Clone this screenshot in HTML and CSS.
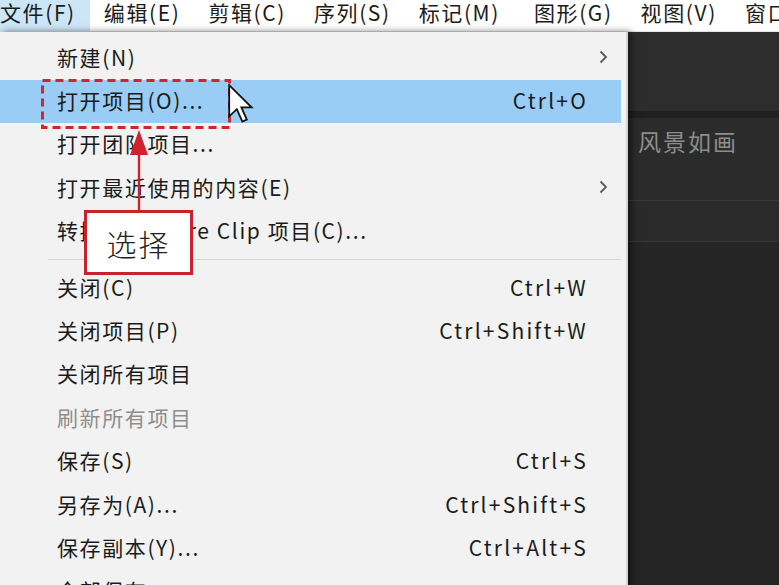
FILE: index.html
```html
<!DOCTYPE html>
<html lang="zh-CN">
<head>
<meta charset="utf-8">
<title>文件菜单</title>
<link rel="stylesheet" href="styles.css">
</head>
<body>
<div class="app">
  <nav class="menubar">
    <span class="mb-item active">文件(F)</span>
    <span class="mb-item">编辑(E)</span>
    <span class="mb-item">剪辑(C)</span>
    <span class="mb-item">序列(S)</span>
    <span class="mb-item wide">标记(M)</span>
    <span class="mb-item">图形(G)</span>
    <span class="mb-item">视图(V)</span>
    <span class="mb-item">窗口(W)</span>
  </nav>
  <div class="workspace">
    <div class="under"></div>
    <aside class="panel">
      <div class="panel-head"></div>
      <div class="panel-band"></div>
      <div class="panel-title">风景如画</div>
      <div class="panel-row"></div>
      <div class="panel-rest"></div>
    </aside>
  </div>

  <div class="menu">
    <div class="row"><span class="label">新建(N)</span><span class="key"></span><span class="sub"><svg width="9" height="14" viewBox="0 0 9 14"><path d="M1.5 1.5 L7 7 L1.5 12.5" fill="none" stroke="#5a5a5a" stroke-width="1.8"/></svg></span></div>
    <div class="row hl"><span class="label">打开项目(O)...</span><span class="key">Ctrl+O</span><span class="sub"></span></div>
    <div class="row"><span class="label">打开团队项目...</span><span class="key"></span><span class="sub"></span></div>
    <div class="row"><span class="label">打开最近使用的内容(E)</span><span class="key"></span><span class="sub"><svg width="9" height="14" viewBox="0 0 9 14"><path d="M1.5 1.5 L7 7 L1.5 12.5" fill="none" stroke="#5a5a5a" stroke-width="1.8"/></svg></span></div>
    <div class="row"><span class="label">转换 Premiere Clip 项目(C)...</span><span class="key"></span><span class="sub"></span></div>
    <div class="sep"></div>
    <div class="row"><span class="label">关闭(C)</span><span class="key">Ctrl+W</span><span class="sub"></span></div>
    <div class="row"><span class="label">关闭项目(P)</span><span class="key">Ctrl+Shift+W</span><span class="sub"></span></div>
    <div class="row"><span class="label">关闭所有项目</span><span class="key"></span><span class="sub"></span></div>
    <div class="row disabled"><span class="label">刷新所有项目</span><span class="key"></span><span class="sub"></span></div>
    <div class="row"><span class="label">保存(S)</span><span class="key">Ctrl+S</span><span class="sub"></span></div>
    <div class="row"><span class="label">另存为(A)...</span><span class="key">Ctrl+Shift+S</span><span class="sub"></span></div>
    <div class="row"><span class="label">保存副本(Y)...</span><span class="key">Ctrl+Alt+S</span><span class="sub"></span></div>
    <div class="row"><span class="label">全部保存</span><span class="key"></span><span class="sub"></span></div>
  </div>

  <svg class="dashbox" width="192" height="52" viewBox="0 0 192 52">
    <rect x="1.5" y="1.5" width="187" height="47" fill="none" stroke="#d5232e" stroke-width="3" stroke-dasharray="8 5"/>
  </svg>

  <svg class="cursor" width="26" height="40" viewBox="0 0 13 20">
    <path d="M0.6 0.6 L0.6 16.2 L4.4 12.6 L7.2 18.8 L9.4 17.8 L6.7 11.7 L11.8 11.7 Z" fill="#ffffff" stroke="#111" stroke-width="0.9" stroke-linejoin="miter"/>
  </svg>

  <svg class="pointer" width="24" height="84" viewBox="0 0 24 84">
    <path d="M12 20 L12 84" stroke="#d0222d" stroke-width="2.4"/>
    <path d="M12 2 L3 27 L21 27 Z" fill="#d0222d"/>
  </svg>

  <div class="callout">选择</div>
</div>
</body>
</html>
```

FILE: styles.css
```css
* { box-sizing: border-box; }
html, body { margin: 0; padding: 0; }
body {
  width: 779px;
  height: 585px;
  overflow: hidden;
  font-family: "Noto Sans CJK SC", "Noto Sans", sans-serif;
  background: #262626;
}
.app {
  position: relative;
  width: 779px;
  height: 585px;
  overflow: hidden;
}

/* menubar */
.menubar {
  display: flex;
  height: 32px;
  margin-left: -14px;
  background: #ffffff;
  border-bottom: 1px solid #e3e3e3;
  white-space: nowrap;
}
.mb-item {
  padding: 0 14px;
  height: 31px;
  line-height: 24px;
  font-size: 21px;
  letter-spacing: 1.6px;
  color: #1b1b1b;
}
.mb-item.wide { padding-right: 20px; }
.mb-item.active { background: #cce6f8; }

/* workspace */
.workspace {
  display: grid;
  grid-template-columns: 628px 1fr;
  height: 553px;
}
.under { background: #2a2a2a; }
.panel {
  display: flex;
  flex-direction: column;
  background: #262626;
}
.panel-head { height: 79px; background: #2d2d2d; }
.panel-band { height: 7px; background: #1f1f1f; }
.panel-title {
  height: 82px;
  background: #2b2b2b;
  padding: 9px 0 0 10px;
  font-size: 23px;
  line-height: 28px;
  letter-spacing: 2px;
  color: #8d8d8d;
}
.panel-row {
  height: 42px;
  background: #2a2a2a;
  border-top: 1px solid #393939;
  border-bottom: 1px solid #393939;
}
.panel-rest { flex: 1; background: #252525; }

/* dropdown menu */
.menu {
  position: absolute;
  left: 0;
  top: 32px;
  width: 628px;
  height: 560px;
  padding: 4.5px 5px 0 0;
  background: #f2f2f2;
  border-right: 2px solid #d4d4d4;
  box-shadow: 3px 0 7px rgba(0, 0, 0, 0.55);
}
.row {
  display: grid;
  grid-template-columns: 1fr auto 35px;
  align-items: center;
  height: 43.4px;
  padding-left: 57px;
  padding-bottom: 3px;
  font-size: 21px;
  letter-spacing: 1.6px;
  color: #1b1b1b;
  white-space: nowrap;
}
.row.hl { background: #99cdf5; }
.row.disabled { color: #8e8e8e; }
.key { letter-spacing: 2.2px; margin-right: -2px; }
.sub {
  display: flex;
  justify-content: center;
  align-items: center;
}
.sep {
  height: 13px;
  margin-left: 48px;
  display: flex;
  align-items: center;
}
.sep::before {
  content: "";
  display: block;
  width: 100%;
  height: 1px;
  background: #d6d6d6;
}

/* annotations */
.dashbox {
  position: absolute;
  left: 41px;
  top: 79px;
}
.cursor {
  position: absolute;
  left: 228px;
  top: 84px;
}
.pointer {
  position: absolute;
  left: 127px;
  top: 128px;
}
.callout {
  position: absolute;
  left: 84px;
  top: 210px;
  width: 109px;
  height: 65px;
  border: 3px solid #c9222b;
  background: #ffffff;
  display: flex;
  align-items: center;
  justify-content: center;
  font-size: 30px;
  font-weight: 300;
  letter-spacing: 2px;
  color: #222;
}
```
